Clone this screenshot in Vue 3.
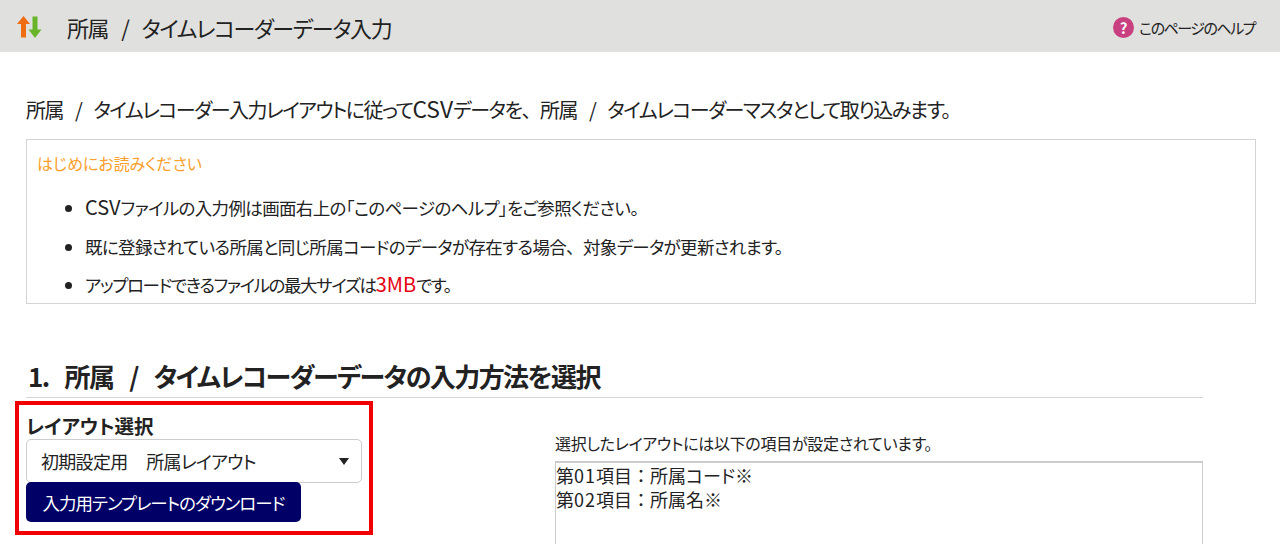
<template>
  <div class="page">
    <!-- page header -->
    <header class="page-header">
      <div class="header-title">
        <svg class="title-icon" width="26" height="24" viewBox="0 0 26 24">
          <path d="M7.500 1L14 9H10V22.500H5V9H1z" fill="#ee6c12" />
          <path d="M19 23L12.500 14.500H16.500V1.500H21.500V14.500H25.500z" fill="#68b52a" />
        </svg>
        <h1 class="title-text">所属 / タイムレコーダーデータ入力</h1>
      </div>
      <a class="help-link">
        <span class="help-icon">?</span>
        <span class="help-text">このページのヘルプ</span>
      </a>
    </header>

    <main class="content">
      <p class="lead">所属 / タイムレコーダー入力レイアウトに従って<span class="latin">CSV</span>データを<span class="full">、</span>所属 / タイムレコーダーマスタとして取り込みます。</p>

      <!-- notice -->
      <section class="notice">
        <p class="notice-title">はじめにお読みください</p>
        <ul class="notice-list">
          <li><span class="latin">CSV</span>ファイルの入力例は画面右上の「このページのヘルプ」をご参照ください。</li>
          <li>既に登録されている所属と同じ所属コードのデータが存在する場合<span class="full">、</span>対象データが更新されます。</li>
          <li class="tight">アップロードできるファイルの最大サイズは<span class="latin accent">3MB</span>です。</li>
        </ul>
      </section>

      <h2 class="section-title">1. 所属 / タイムレコーダーデータの入力方法を選択</h2>

      <div class="section-body">
        <div class="layout-picker">
          <div class="picker-label">レイアウト選択</div>
          <div class="select-box">
            <span>初期設定用&nbsp;&nbsp;所属レイアウト</span>
            <span class="select-arrow"></span>
          </div>
          <button class="download-btn">入力用テンプレートのダウンロード</button>
        </div>

        <div class="layout-items">
          <p class="items-caption">選択したレイアウトには以下の項目が設定されています。</p>
          <div class="items-box">
            <div v-for="item in items" :key="item.no">第<span class="num">{{ item.no }}</span>項目<span class="full">：</span>{{ item.name }}※</div>
          </div>
        </div>
      </div>
    </main>
  </div>
</template>

<script setup>
const items = [
  { no: '01', name: '所属コード' },
  { no: '02', name: '所属名' },
]
</script>

<style>
html,
body {
  margin: 0;
  overflow: hidden;
}
</style>

<style scoped>
.page {
  width: 1280px;
  height: 544px;
  overflow: hidden;
  background: #fff;
  color: #222;
  font-family: "Noto Sans CJK JP", "Noto Sans", sans-serif;
  font-feature-settings: "palt";
}

.page-header {
  height: 52px;
  background: #e0e0de;
  display: flex;
  align-items: center;
  justify-content: space-between;
  padding: 2px 25px 0 16px;
  box-sizing: border-box;
}

.header-title {
  display: flex;
  align-items: center;
  gap: 25px;
}

.title-icon {
  flex-shrink: 0;
}

.title-text {
  margin: 0;
  font-size: 22px;
  font-weight: 400;
  line-height: 1;
  letter-spacing: -1.4px;
  word-spacing: 9.500px;
}

.help-link {
  display: flex;
  align-items: center;
  gap: 5px;
  font-size: 15px;
}

.help-text {
  letter-spacing: -1.5px;
}

.help-icon {
  width: 21px;
  height: 21px;
  border-radius: 50%;
  background: #c8407f;
  color: #fff;
  font-size: 15px;
  font-weight: 700;
  display: flex;
  align-items: center;
  justify-content: center;
}

.content {
  padding: 0 24px 0 26px;
}

.lead {
  margin: 45px 0 0;
  font-size: 20px;
  line-height: 26px;
  letter-spacing: -1.500px;
  word-spacing: 9px;
  white-space: nowrap;
}

.latin {
  font-size: 1.14em;
  letter-spacing: 0;
  line-height: 1;
}

.full {
  font-feature-settings: normal;
}

.notice {
  margin-top: 16px;
  height: 165px;
  box-sizing: border-box;
  border: 1px solid #d4d4d4;
  padding: 11px 10px;
}

.notice-title {
  margin: 0;
  color: #f9a02c;
  font-size: 16px;
  line-height: 24px;
}

.notice-list {
  margin: 14px 0 0;
  padding-left: 48px;
  font-size: 17.500px;
  line-height: 38.500px;
  letter-spacing: -0.650px;
}

.tight {
  letter-spacing: -1.400px;
}

.accent {
  color: #e60012;
}

.section-title {
  width: 1177px;
  box-sizing: border-box;
  margin: 53px 0 0;
  padding: 0 0 3px 2px;
  border-bottom: 1px solid #d4d4d4;
  font-size: 26px;
  font-weight: 700;
  line-height: 37px;
  letter-spacing: -1.550px;
  word-spacing: 11.500px;
}

.section-body {
  display: flex;
  width: 1177px;
  justify-content: space-between;
  margin-top: 3px;
}

.layout-picker {
  width: 358px;
  height: 134px;
  box-sizing: border-box;
  margin-left: -11px;
  border: 4px solid #f00000;
  padding: 7px 7px;
}

.picker-label {
  font-size: 19.500px;
  font-weight: 700;
  line-height: 27px;
}

.select-box {
  width: 336px;
  height: 44px;
  box-sizing: border-box;
  border: 1px solid #ccc;
  border-radius: 5px;
  padding: 0 12px 0 14px;
  display: flex;
  align-items: center;
  justify-content: space-between;
  font-size: 18px;
  letter-spacing: -0.700px;
  word-spacing: 6px;
}

.select-arrow {
  border-left: 5px solid transparent;
  border-right: 5px solid transparent;
  border-top: 7px solid #222;
}

.download-btn {
  display: block;
  width: 275px;
  height: 40px;
  margin-top: -1px;
  border: none;
  border-radius: 5px;
  background: #000066;
  color: #fff;
  font-family: inherit;
  font-feature-settings: inherit;
  font-size: 17.500px;
  letter-spacing: -1px;
}

.layout-items {
  width: 648px;
  padding-top: 28px;
}

.items-caption {
  margin: 0 0 4px;
  font-size: 16px;
  line-height: 28px;
  letter-spacing: -0.28px;
}

.items-box {
  height: 120px;
  box-sizing: border-box;
  border: 1px solid #ccc;
  border-top-width: 2px;
  font-size: 18px;
  line-height: 24px;
}

.num {
  letter-spacing: 1px;
}
</style>
